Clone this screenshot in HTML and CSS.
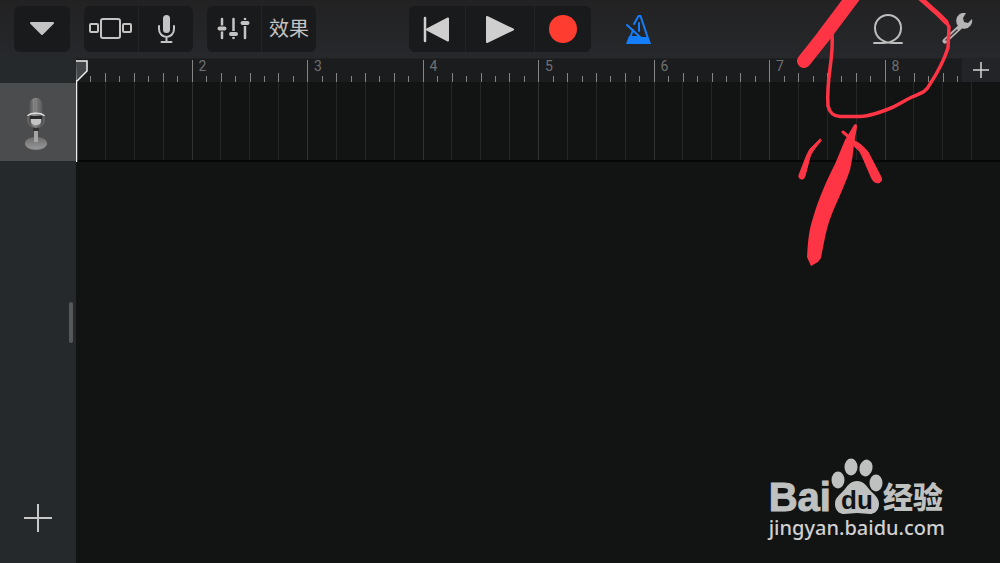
FILE: index.html
```html
<!DOCTYPE html>
<html lang="zh-CN">
<head>
  <meta charset="UTF-8">
  <meta name="viewport" content="width=device-width, initial-scale=1.0">
  <title>Tracks</title>
  <link rel="stylesheet" href="styles.css">
</head>
<body>
  <header class="toolbar">
    <div class="tools">
      <div class="group">
        <button class="tool" aria-label="Menu">
          <svg width="26" height="14" viewBox="0 0 26 14"><path d="M2 1h22L13 12z" fill="#c4c4c4" stroke="#c4c4c4" stroke-width="2" stroke-linejoin="round"/></svg>
        </button>
      </div>
      <div class="group">
        <button class="tool" aria-label="Browser">
          <svg width="44" height="24" viewBox="0 0 44 24" fill="none" stroke="#c4c4c4" stroke-width="2"><rect x="12" y="2" width="19" height="19" rx="2"/><rect x="1" y="7" width="8" height="8" rx="1"/><rect x="34" y="7" width="8" height="8" rx="1"/></svg>
        </button>
        <button class="tool" aria-label="Recorder">
          <svg width="20" height="30" viewBox="0 0 20 30" fill="none" stroke="#c4c4c4" stroke-width="2" stroke-linecap="round"><rect x="7" y="1" width="7" height="18" rx="3.500" fill="#c4c4c4" stroke="none"/><path d="M3 12v3c0 4 3 8 7.500 8s7.500-4 7.500-8v-3M10.500 23v5M5.500 28h10"/></svg>
        </button>
      </div>
      <div class="group">
        <button class="tool" aria-label="Controls">
          <svg width="34" height="24" viewBox="0 0 34 24" fill="none" stroke="#c4c4c4" stroke-linecap="round"><path stroke-width="2.500" d="M5 2v19M16.500 2v19M28 2v19"/><path stroke="#191a1b" stroke-width="6" stroke-linecap="butt" d="M2 11.500h6M13 17h7M25 6h6"/><path stroke-width="4" d="M2.500 11.500h5M14 17h5M25.500 6h5"/></svg>
        </button>
        <button class="tool effects">效果</button>
      </div>
    </div>

    <div class="group transport">
      <button class="tool" aria-label="Rewind">
        <svg width="28" height="28" viewBox="0 0 28 28" fill="#cfcfcf" stroke="#cfcfcf" stroke-linejoin="round" stroke-linecap="round"><path stroke-width="2.500" d="M2 3v23"/><path stroke-width="2" d="M25 3.500v22L4 14.500z"/></svg>
      </button>
      <button class="tool play" aria-label="Play">
        <svg width="30" height="30" viewBox="0 0 30 30"><path d="M2 3v25l26-12.500z" fill="#cfcfcf" stroke="#cfcfcf" stroke-width="2" stroke-linejoin="round"/></svg>
      </button>
      <button class="tool" aria-label="Record"><span class="record-dot"></span></button>
    </div>

    <div class="options">
      <button class="tool metronome" aria-label="Metronome">
        <svg width="28" height="32" viewBox="0 0 28 32" fill="none" stroke="#157efb" stroke-width="2" stroke-linejoin="round" stroke-linecap="round"><path d="M9 11l4.500-8h2l9 27M8 17l-3 8M14 10v8"/><path fill="#157efb" stroke="none" d="M4 23h10l3 1h6l3 7H1z"/><path d="M2 12l13 12"/></svg>
      </button>
      <div class="right-options">
        <button class="tool" aria-label="Loops">
          <svg width="32" height="32" viewBox="0 0 32 32" fill="none" stroke="#bdbdbd" stroke-width="2" stroke-linecap="round"><path d="M2 30h9C20 30 29 25 29 15A13 13 0 0 0 3 15C3 25 12 30 21 30h9"/></svg>
        </button>
        <button class="tool" aria-label="Settings">
          <svg width="32" height="32" viewBox="0 0 32 32"><path d="M3 28L18 14" stroke="#b5b5b5" stroke-width="5" stroke-linecap="round"/><path d="M4 27L15 17" stroke="#3a3a3b" stroke-width="1.500" stroke-linecap="round"/><path d="M24 0a8 8 0 1 0 6 6l-4 4-4-1-1-4z" fill="#b5b5b5"/></svg>
        </button>
      </div>
    </div>
  </header>

  <main class="workspace">
    <aside class="sidebar">
      <div class="corner"></div>
      <button class="track" aria-label="Microphone track">
        <svg width="26" height="54" viewBox="0 0 26 54">
          <defs>
            <linearGradient id="metal"><stop offset="0" stop-color="#4c4c4c"/><stop offset=".4" stop-color="#969696"/><stop offset="1" stop-color="#4c4c4c"/></linearGradient>
            <linearGradient id="base" x2="0" y2="1"><stop offset="0" stop-color="#6c6c6c"/><stop offset="1" stop-color="#979797"/></linearGradient>
          </defs>
          <ellipse cx="13" cy="47" rx="11" ry="6" fill="#8a8a8a"/>
          <ellipse cx="13" cy="46" rx="11" ry="6" fill="url(#base)"/>
          <path d="M11 30h4v15h-4z" fill="#a5a5a5"/>
          <path d="M10 30h6v4h-6z" fill="#333"/>
          <rect x="6" y="1" width="14" height="29" rx="7" fill="url(#metal)"/>
          <path d="M9 4v11M12 2v13M15 2v13M18 5v10" stroke="#666"/>
          <path d="M7 19h12v3H7z" fill="#292929"/>
          <path d="M8 22h10v2c0 3-2 4-5 4s-5-1-5-4z" fill="#c4c4c4"/>
          <path d="M5 18.500c3-3 13-3 16 0" fill="none" stroke="#ddd" stroke-width="1.500" stroke-linecap="round"/>
          <path d="M5 20v3c0 10 16 10 16 0v-3" fill="none" stroke="#777"/>
        </svg>
      </button>
      <div class="track-list">
        <div class="resize-handle"></div>
        <button class="add-track" aria-label="Add track">
          <svg width="28" height="28" viewBox="0 0 28 28" stroke="#c8c8c8" stroke-width="2"><path d="M14 0v28M0 14h28"/></svg>
        </button>
      </div>
    </aside>

    <section class="timeline">
      <div class="ruler" id="ruler"></div>
      <button class="add-section" aria-label="Add section">
        <svg width="16" height="16" viewBox="0 0 16 16" stroke="#d5d5d5" stroke-width="1.500"><path d="M8 0v16M0 8h16"/></svg>
      </button>
      <div class="lane" id="lane"></div>
      <svg class="playhead" width="14" height="103" viewBox="0 0 14 103" fill="none" stroke="#eee"><path d="M0 2h11v10L1 22" fill="#444548" stroke-width="1.500"/><path d="M.500 21v82" stroke-width="1.500"/></svg>
    </section>
  </main>

  <svg class="scribble" width="220" height="280" viewBox="0 0 220 280" fill="none" stroke="#ff3445" stroke-linecap="round" stroke-linejoin="round">
    <path stroke-width="14" d="M24 61L43 37L76-7"/>
    <path stroke-width="3.500" d="M52 34C54 60 46 76 48 106C50 114 54 116 60 116.500C86 117 90 116 106 110C118 106 121 102 132 97C142 93 146 92 150 84C158 72 164 60 168 48L169 27C167 22 165 20 160 16"/>
    <path stroke-width="5" d="M166 22L158 14L140-2"/>
    <path fill="#ff3445" stroke="none" d="M74 125Q77 122 77 127L74 144Q73 157 70 170C64 188 54 207 49 222C45 235 43 248 41 258L38 262L31 266L27 257C28 240 29 230 33 218C39 197 47 180 55 164L65 140Z"/>
    <path stroke-width="3" d="M63 132L70 138"/>
    <path fill="#ff3445" stroke-width="1" d="M70 138L80 144Q86 149 88 152L101 177Q103 182 98 183Q94 183 92 179L83 158Q81 151 74 146Z"/>
    <path fill="#ff3445" stroke-width="1" d="M40 139L30 149Q27 154 26 157L19 175Q18 178 21 179Q24 180 25 176L30 157Q32 151 41 141Z"/>
  </svg>

  <div class="watermark">
    <div class="brand">
      <span class="brand-name">Bai</span>
      <span class="paw">
        <svg width="52" height="56" viewBox="0 0 52 56" fill="#bfc1c0"><ellipse cx="7" cy="22" rx="6.500" ry="8.500"/><ellipse cx="20" cy="9" rx="6.500" ry="8.500"/><ellipse cx="35" cy="10" rx="6.500" ry="8.500" transform="rotate(12 35 10)"/><ellipse cx="45" cy="25" rx="6.500" ry="8.500"/><path d="M26 23c-6 0-9 4-12 8-5 6-10 8-10 15 0 6 4 10 9 10l13-1 13 1c5 0 9-4 9-10 0-7-6-10-10-15-3-4-6-8-12-8z"/></svg>
        <span class="paw-text">du</span>
      </span>
      <span class="brand-cn">经验</span>
    </div>
    <a class="site" href="#">jingyan.baidu.com</a>
  </div>

  <script>
    const ruler = document.getElementById('ruler');
    const lane = document.getElementById('lane');

    // 8 bars, four beats each, with a short tick between beats
    for (let bar = 1; bar <= 8; bar++) {
      const measure = document.createElement('div');
      measure.className = 'measure';
      for (let i = 0; i < 8; i++) {
        const tick = document.createElement('span');
        tick.className = i === 0 ? 'tick bar-line' : i % 2 ? 'tick' : 'tick beat';
        if (i === 0 && bar > 1) tick.textContent = bar;
        measure.appendChild(tick);
      }
      ruler.appendChild(measure);
      for (let beat = 0; beat < 4; beat++) {
        const cell = document.createElement('div');
        cell.className = beat === 0 ? 'cell first' : 'cell';
        lane.appendChild(cell);
      }
    }
  </script>
</body>
</html>
```

FILE: styles.css
```css
* {
  box-sizing: border-box;
}
body {
  margin: 0;
  min-height: 100vh;
  display: flex;
  flex-direction: column;
  position: relative;
  background: #121413;
  font-family: Roboto, "Noto Sans CJK SC", sans-serif;
  color: #c4c4c4;
  overflow: hidden;
}
button {
  padding: 0;
  border: none;
  background: none;
  color: inherit;
  font-family: inherit;
  cursor: pointer;
}
svg {
  display: block;
}
.toolbar {
  display: grid;
  grid-template-columns: 1fr auto 1fr;
  padding: 6px 14px;
  background: linear-gradient(#222223, #26282b);
}
.tools {
  display: flex;
  gap: 14px;
}
.group {
  display: flex;
  gap: 1px;
  background: #232425;
  border-radius: 6px;
  overflow: hidden;
}
.tool {
  display: flex;
  align-items: center;
  justify-content: center;
  width: 56px;
  height: 46px;
}
.group .tool {
  background: #191a1b;
}
.tools .group + .group .tool {
  width: 54px;
}
.effects {
  font-size: 20px;
  line-height: 24px;
}
.transport .play {
  width: 68px;
}
.record-dot {
  width: 28px;
  height: 28px;
  border-radius: 50%;
  background: #ff3c30;
}
.options {
  display: flex;
  justify-content: space-between;
  padding-left: 20px;
}
.right-options {
  display: flex;
  gap: 14px;
}
.workspace {
  flex: 1;
  display: grid;
  grid-template-columns: 76px 1fr;
}
.sidebar {
  display: flex;
  flex-direction: column;
  background: #25292b;
}
.corner {
  height: 25px;
}
.track {
  display: flex;
  align-items: center;
  justify-content: center;
  height: 78px;
  padding: 4px 4px 0 0;
  background: #4b4c4e;
}
.track-list {
  flex: 1;
  display: flex;
  flex-direction: column;
  justify-content: space-between;
  align-items: center;
  padding: 141px 0 31px;
}
.resize-handle {
  align-self: flex-end;
  width: 4px;
  height: 41px;
  margin-right: 3px;
  border-radius: 2px;
  background: #565759;
}
.timeline {
  position: relative;
}
.ruler {
  display: grid;
  grid-template-columns: repeat(8, 1fr);
  height: 24px;
  background: #1b1c1d;
  border-top: 1px solid #202123;
}
.measure {
  display: grid;
  grid-template-columns: repeat(8, 1fr);
  align-items: end;
}
.tick {
  height: 6px;
  border-left: 1px solid #858585;
}
.tick.beat {
  height: 9px;
}
.tick.bar-line {
  height: 22px;
  padding-left: 6px;
  font-size: 14px;
  line-height: 12px;
  color: #707172;
}
.add-section {
  position: absolute;
  top: 0;
  right: 0;
  display: flex;
  align-items: center;
  justify-content: center;
  width: 38px;
  height: 24px;
  background: #232427;
}
.lane {
  display: grid;
  grid-template-columns: repeat(32, 1fr);
  height: 80px;
  border-bottom: 2px solid #050606;
}
.cell {
  border-left: 1px solid #252726;
}
.cell.first {
  border-color: #303231;
}
.playhead {
  position: absolute;
  top: 1px;
  left: 0;
}
.scribble {
  position: absolute;
  top: 0;
  right: 0;
  pointer-events: none;
}
.watermark {
  position: absolute;
  right: 55px;
  bottom: 21px;
  color: #bfc1c0;
}
.brand {
  display: flex;
  align-items: flex-end;
}
.brand-name {
  font: bold 40px/34px "Liberation Sans", sans-serif;
  -webkit-text-stroke: 1px #bfc1c0;
}
.paw {
  position: relative;
}
.paw-text {
  position: absolute;
  left: 0;
  right: 0;
  bottom: 1px;
  text-align: center;
  font: bold 26px/26px "Liberation Sans", sans-serif;
  color: #121413;
}
.brand-cn {
  font: 900 30px/38px "Noto Sans CJK SC", sans-serif;
}
.site {
  display: block;
  font: 500 20px/28px "Noto Sans", sans-serif;
  color: #d0d1d0;
  text-decoration: none;
}
```
